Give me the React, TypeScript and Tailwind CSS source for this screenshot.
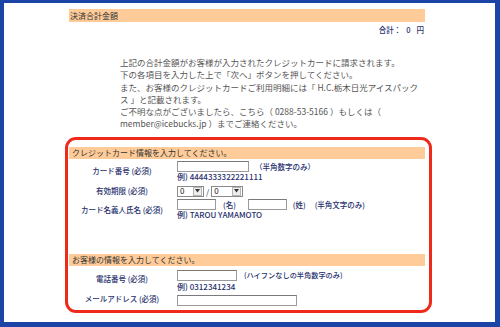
import React from "react";

const navy = "text-[#27306e]";

function Input({ w }: { w: number }) {
  return (
    <div
      className="h-[11px] bg-white border border-[#9a9a9a] border-t-[#7a7a7a]"
      style={{ width: w }}
    />
  );
}

function Select({ w }: { w: number }) {
  return (
    <div
      className="h-[11px] bg-white border border-[#8a8a8a] flex items-center justify-between"
      style={{ width: w }}
    >
      <span className="text-[8px] leading-none pl-[2px] text-[#222]">0</span>
      <span className="h-[9px] w-[9px] mr-[1px] bg-[#eeeeee] border border-[#b5b5b5] flex items-center justify-center">
        <svg width="5" height="4" viewBox="0 0 5 4">
          <polygon points="0,0 5,0 2.5,3.5" fill="#333" />
        </svg>
      </span>
    </div>
  );
}

function Label({ children }: { children: React.ReactNode }) {
  return (
    <div className={`w-[106px] shrink-0 flex items-center justify-center text-[7.5px] leading-none font-medium ${navy}`}>
      {children}
    </div>
  );
}

export default function App() {
  return (
    <div
      className="w-[500px] h-[327px] box-border bg-white border-[#1c44a6] border-l-4 border-t-[3px] border-r-[5px] border-b-[5px] overflow-hidden"
      style={{ fontFamily: '"Noto Sans CJK JP", "Noto Sans", sans-serif' }}
    >
      {/* Top section */}
      <div className="ml-[65px] w-[356px]">
        <div className="mt-[6px] h-[13px] bg-[#ffcc99] flex items-center pl-[1px] text-[8px] leading-none text-[#333]">
          決済合計金額
        </div>
        <div className={`mt-[3px] h-[10px] flex items-center justify-end pr-[1px] text-[7.5px] leading-none font-medium ${navy}`}>
          <span>合計：</span>
          <span className="ml-[5px]">0</span>
          <span className="ml-[6px]">円</span>
        </div>
        <div className="mt-[21px] ml-[51px] text-[8.5px] leading-[12.3px] text-[#555] whitespace-nowrap">
          <div>上記の合計金額がお客様が入力されたクレジットカードに請求されます。</div>
          <div>下の各項目を入力した上で「次へ」ボタンを押してください。</div>
          <div>また、お客様のクレジットカードご利用明細には「 H.C.栃木日光アイスパック</div>
          <div>ス 」と記載されます。</div>
          <div>ご不明な点がございましたら、こちら（ 0288-53-5166 ）もしくは（</div>
          <div>member@icebucks.jp ）までご連絡ください。</div>
        </div>
      </div>

      {/* Red box */}
      <div className="mt-[7px] ml-[61px] w-[367px] border-[3px] border-[#ee2a1a] rounded-[11px] pt-[7px] pb-[4px] pl-[1px] pr-[4px]">
        <div className="h-[12px] bg-[#ffcc99] flex items-center pl-[3px] text-[8px] leading-none text-[#333]">
          クレジットカード情報を入力してください。
        </div>

        {/* card number */}
        <div className="flex h-[24px]">
          <Label>カード番号 (必須)</Label>
          <div className="pl-[2px] pt-[2px]">
            <div className="flex items-center">
              <Input w={72} />
              <span className={`ml-[6px] text-[7.5px] leading-none font-medium ${navy}`}>（半角数字のみ）</span>
            </div>
            <div className={`h-[10px] flex items-center text-[8px] leading-none font-medium ${navy}`}>
              例) 4444333322221111
            </div>
          </div>
        </div>

        {/* expiry */}
        <div className="flex h-[15px]">
          <Label>有効期限 (必須)</Label>
          <div className="pl-[2px] pt-[3px] flex items-start">
            <Select w={27} />
            <span className={`mx-[2px] text-[8px] leading-[11px] ${navy}`}>/</span>
            <Select w={32} />
          </div>
        </div>

        {/* name */}
        <div className="flex h-[24px]">
          <Label>カード名義人氏名 (必須)</Label>
          <div className="pl-[2px] pt-[1px]">
            <div className="flex items-center">
              <Input w={39} />
              <span className={`ml-[7px] text-[7.5px] leading-none font-medium ${navy}`}>(名)</span>
              <span className="ml-[12px]"><Input w={39} /></span>
              <span className={`ml-[6px] text-[7.5px] leading-none font-medium ${navy}`}>(姓)</span>
              <span className={`ml-[9px] text-[7.5px] leading-none font-medium ${navy}`}>(半角文字のみ)</span>
            </div>
            <div className={`h-[10px] flex items-center text-[8px] leading-none font-medium ${navy}`}>
              例) TAROU YAMAMOTO
            </div>
          </div>
        </div>

        <div className="mt-[32px] h-[12px] bg-[#ffcc99] flex items-center pl-[3px] text-[8px] leading-none text-[#333]">
          お客様の情報を入力してください。
        </div>

        {/* tel */}
        <div className="flex h-[26px]">
          <Label>電話番号 (必須)</Label>
          <div className="pl-[2px] pt-[4px]">
            <div className="flex items-center">
              <Input w={60} />
              <span className={`ml-[7px] text-[7.2px] leading-none font-medium ${navy}`}>(ハイフンなしの半角数字のみ)</span>
            </div>
            <div className={`mt-[1px] h-[10px] flex items-center text-[8px] leading-none font-medium ${navy}`}>
              例) 0312341234
            </div>
          </div>
        </div>

        {/* email */}
        <div className="flex h-[14px]">
          <Label>メールアドレス (必須)</Label>
          <div className="pl-[2px] pt-[3px]">
            <Input w={120} />
          </div>
        </div>
      </div>
    </div>
  );
}
